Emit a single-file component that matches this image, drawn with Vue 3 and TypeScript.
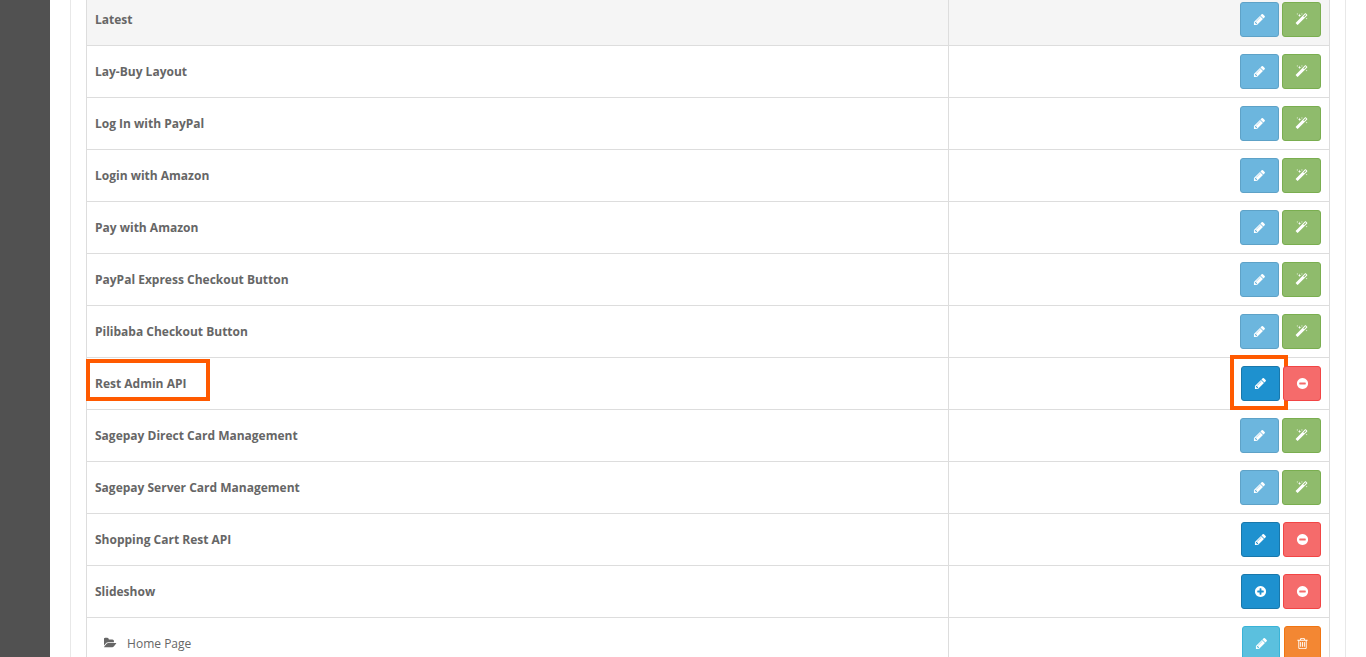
<script setup lang="ts">
type IconName = 'pencil' | 'magic' | 'minus' | 'plus' | 'trash'

interface RowButton {
  icon: IconName
  kind: string
  marked?: boolean
}

interface Row {
  name: string
  buttons: RowButton[]
  child?: boolean
  marked?: boolean
  hover?: boolean
}

const icons: Record<IconName, string> = {
  pencil: 'M491 1536l91-91-235-235-91 91v107h128v128h107zm523-928q0-22-22-22-10 0-17 7l-542 542q-7 7-7 17 0 22 22 22 10 0 17-7l542-542q7-7 7-17zm-54-192l416 416-832 832h-416v-416zm683 96q0 53-37 90l-166 166-416-416 166-165q36-38 90-38 53 0 91 38l235 234q37 39 37 91z',
  magic: 'M1254 581l293-293-107-107-293 293zm447-293q0 27-18 45l-1286 1286q-18 18-45 18t-45-18l-198-198q-18-18-18-45t18-45l1286-1286q18-18 45-18t45 18l198 198q18 18 18 45zm-1351-190l98 30-98 30-30 98-30-98-98-30 98-30 30-98zm350 162l196 60-196 60-60 196-60-196-196-60 196-60 60-196zm930 478l98 30-98 30-30 98-30-98-98-30 98-30 30-98zm-640-640l98 30-98 30-30 98-30-98-98-30 98-30 30-98z',
  minus: 'M1344 960v-128q0-26-19-45t-45-19h-768q-26 0-45 19t-19 45v128q0 26 19 45t45 19h768q26 0 45-19t19-45zm320-64q0 209-103 385.5t-279.5 279.5-385.5 103-385.5-103-279.5-279.5-103-385.5 103-385.5 279.5-279.5 385.5-103 385.5 103 279.5 279.5 103 385.5z',
  plus: 'M1344 960v-128q0-26-19-45t-45-19h-256v-256q0-26-19-45t-45-19h-128q-26 0-45 19t-19 45v256h-256q-26 0-45 19t-19 45v128q0 26 19 45t45 19h256v256q0 26 19 45t45 19h128q26 0 45-19t19-45v-256h256q26 0 45-19t19-45zm320-64q0 209-103 385.5t-279.5 279.5-385.5 103-385.5-103-279.5-279.5-103-385.5 103-385.5 279.5-279.5 385.5-103 385.5 103 279.5 279.5 103 385.5z',
  trash: 'M704 736v576q0 14-9 23t-23 9h-64q-14 0-23-9t-9-23v-576q0-14 9-23t23-9h64q14 0 23 9t9 23zm256 0v576q0 14-9 23t-23 9h-64q-14 0-23-9t-9-23v-576q0-14 9-23t23-9h64q14 0 23 9t9 23zm256 0v576q0 14-9 23t-23 9h-64q-14 0-23-9t-9-23v-576q0-14 9-23t23-9h64q14 0 23 9t9 23zm128 724v-948h-896v948q0 22 7 40.5t14.5 27 10.5 8.5h832q3 0 10.5-8.5t14.5-27 7-40.5zm-672-1076h448l-48-117q-7-9-17-11h-317q-10 2-17 11zm928 32v64q0 14-9 23t-23 9h-96v948q0 83-47 143.5t-113 60.5h-832q-66 0-113-58.5t-47-141.5v-952h-96q-14 0-23-9t-9-23v-64q0-14 9-23t23-9h309l70-167q15-37 54-63t79-26h320q40 0 79 26t54 63l70 167h309q14 0 23 9t9 23z',
}

const folderOpen = 'M1815 952q0 31-31 66l-336 396q-43 51-120.5 86.5t-143.5 35.5h-1088q-34 0-60.5-13t-26.5-43q0-31 31-66l336-396q43-51 120.5-86.5t143.5-35.5h1088q34 0 60.5 13t26.5 43zm-343-344v160h-832q-94 0-197 47.5t-164 119.5l-337 396-5 6q0-4-.5-12.5t-.5-12.5v-960q0-92 66-158t158-66h320q92 0 158 66t66 158v32h544q92 0 158 66t66 158z'

const notInstalled: RowButton[] = [
  { icon: 'pencil', kind: 'soft-blue' },
  { icon: 'magic', kind: 'green' },
]

const rows: Row[] = [
  { name: 'Latest', buttons: notInstalled, hover: true },
  { name: 'Lay-Buy Layout', buttons: notInstalled },
  { name: 'Log In with PayPal', buttons: notInstalled },
  { name: 'Login with Amazon', buttons: notInstalled },
  { name: 'Pay with Amazon', buttons: notInstalled },
  { name: 'PayPal Express Checkout Button', buttons: notInstalled },
  { name: 'Pilibaba Checkout Button', buttons: notInstalled },
  {
    name: 'Rest Admin API',
    marked: true,
    buttons: [
      { icon: 'pencil', kind: 'blue', marked: true },
      { icon: 'minus', kind: 'red' },
    ],
  },
  { name: 'Sagepay Direct Card Management', buttons: notInstalled },
  { name: 'Sagepay Server Card Management', buttons: notInstalled },
  {
    name: 'Shopping Cart Rest API',
    buttons: [
      { icon: 'pencil', kind: 'blue' },
      { icon: 'minus', kind: 'red' },
    ],
  },
  {
    name: 'Slideshow',
    buttons: [
      { icon: 'plus', kind: 'blue' },
      { icon: 'minus', kind: 'red' },
    ],
  },
  {
    name: 'Home Page',
    child: true,
    buttons: [
      { icon: 'pencil', kind: 'cyan' },
      { icon: 'trash', kind: 'orange' },
    ],
  },
]
</script>

<template>
  <div class="page">
    <aside class="sidebar"></aside>
    <main class="content">
      <section class="panel">
        <table class="modules">
          <tbody>
            <tr v-for="row in rows" :key="row.name" :class="{ hover: row.hover }">
              <td class="name" :class="{ child: row.child }">
                <span v-if="row.marked" class="mark mark-name"></span>
                <svg v-if="row.child" class="folder" viewBox="0 0 1920 1792">
                  <path :d="folderOpen" fill="#666" />
                </svg>
                {{ row.name }}
              </td>
              <td class="action">
                <div class="buttons">
                  <button v-for="b in row.buttons" :key="b.icon" type="button" class="btn" :class="[b.kind, b.icon]">
                    <span v-if="b.marked" class="mark mark-btn"></span>
                    <svg class="icon" viewBox="0 0 1792 1792">
                      <path :d="icons[b.icon]" fill="#fff" />
                    </svg>
                  </button>
                </div>
              </td>
            </tr>
          </tbody>
        </table>
      </section>
    </main>
  </div>
</template>

<style>
html,
body {
  margin: 0;
  overflow: hidden;
  background: #fff;
}
</style>

<style scoped>
.page {
  display: flex;
  height: 657px;
  overflow: hidden;
  font-family: "Open Sans", sans-serif;
  font-size: 12px;
  color: #666;
}

.sidebar {
  width: 50px;
  flex: none;
  background: #515151;
}

.content {
  flex: none;
  padding-left: 20px;
}

.panel {
  width: 1244px;
  padding: 0 15px;
  border-left: 1px solid #e8e8e8;
  border-right: 1px solid #e8e8e8;
  margin-top: -7px;
}

.modules {
  width: 1244px;
  border-collapse: collapse;
  table-layout: fixed;
}

.modules td {
  height: 35px;
  padding: 8px;
  border: 1px solid #ddd;
  vertical-align: middle;
  box-sizing: content-box;
}

.hover td {
  background: #f5f5f5;
}

.name {
  position: relative;
  width: 845px;
  font-weight: 700;
}

.name.child {
  padding-left: 17px !important;
  font-weight: 400;
}

.folder {
  width: 13px;
  height: 12px;
  margin-right: 7px;
  vertical-align: -1px;
}

.buttons {
  display: flex;
  justify-content: flex-end;
  gap: 3px;
}

.btn {
  position: relative;
  display: flex;
  align-items: center;
  justify-content: center;
  box-sizing: border-box;
  width: 39px;
  height: 35px;
  padding: 0;
  border: 1px solid;
  border-radius: 3px;
}

.btn.minus {
  width: 38px;
}

.btn.trash {
  width: 37px;
  margin-left: 1px;
}

.btn.cyan {
  width: 38px;
}

.icon {
  width: 13px;
  height: 13px;
}

.soft-blue {
  background: #6cb6de;
  border-color: #5ea2c7;
}

.blue {
  background: #1e91cf;
  border-color: #1978ab;
}

.green {
  background: #8fbb6c;
  border-color: #7aae50;
}

.red {
  background: #f56b6b;
  border-color: #f24545;
}

.cyan {
  background: #5bc0de;
  border-color: #39b3d7;
}

.orange {
  background: #f38733;
  border-color: #f17512;
}

.mark {
  position: absolute;
  box-sizing: border-box;
  border: 4px solid #ff5a00;
  pointer-events: none;
}

.mark-name {
  left: -1px;
  top: 1px;
  width: 124px;
  height: 42px;
}

.mark-btn {
  left: -12px;
  top: -12px;
  width: 58px;
  height: 55px;
}
</style>
